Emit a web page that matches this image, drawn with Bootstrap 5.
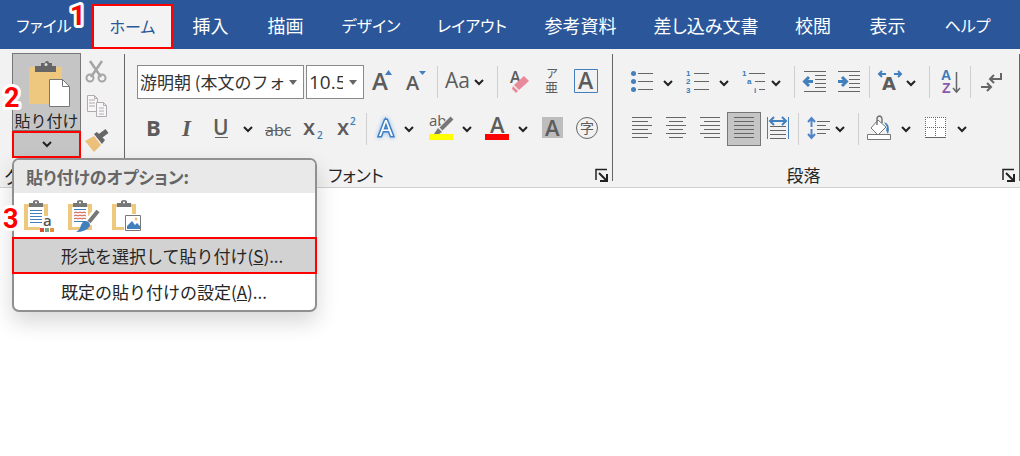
<!DOCTYPE html>
<html lang="ja">
<head>
<meta charset="utf-8">
<meta name="viewport" content="width=device-width, initial-scale=1">
<title>文書</title>
<link rel="stylesheet" href="https://cdn.jsdelivr.net/npm/bootstrap@5.3.0/dist/css/bootstrap.min.css">
<style>
  body { font-family: "Noto Sans CJK JP", sans-serif; font-size: 18px; line-height: 24px; font-feature-settings: "palt"; color: #262626; background: #fff; min-height: 100vh; }
  .tab-bar { background: #2b579a; display: grid; grid-template-columns: 88fr 85fr 75fr 75fr 96fr 106fr 111fr 140fr 74fr 75fr 85fr 10fr; height: 49px; padding-top: 4px; white-space: nowrap; }
  .tab-bar .nav-link { color: #fff; padding: 0 0 4px; display: flex; align-items: center; justify-content: center; }
  .tab-bar .kana-tab { font-size: 16px; }
  .tab-bar .nav-link.active { background: #f3f3f3; color: #2b579a; border: 2px solid #f00; margin-left: 4px; padding-bottom: 2px; }
  .ribbon { background: #f2f2f2; border-bottom: 1px solid #d0d0d0; }
  .ribbon .vr { color: #666; opacity: 1; margin: 5px 0 6px; }
  .tool-group { padding: 16px 0 0 12px; }
  .font-group { width: 487px; }
  .tool-row { display: flex; height: 34px; margin-bottom: 13px; }
  .tool-row button, .launcher { border: 0; padding: 0; background: none; line-height: 0; }
  .tool-row button:hover { background: #dcdcdc; }
  .tool-row .pressed { background: #c5c5c5; outline: 1px solid #777; outline-offset: -1px; }
  .tool-row i { width: 1px; margin: 1px 3px; background: #cfcfcf; }
  .group-name { display: flex; align-items: center; line-height: 24px; margin-left: -12px; padding: 4px 4px 0 0; }
  .group-name span { flex: 1; text-align: center; font-size: 17px; padding-right: 8px; }
  .font-box { appearance: none; border: 1px solid #8a8a8a; border-radius: 0; color: #333; padding: 0 16px 0 2px; background: #fff url("data:image/svg+xml,%3Csvg xmlns='http://www.w3.org/2000/svg' width='8' height='5'%3E%3Cpath d='M0 0h8L4 5z' fill='%23666'/%3E%3C/svg%3E") no-repeat right 6px center; font-size: 17px; margin-right: 2px; overflow: hidden; text-overflow: clip; }
  .font-face { width: 167px; }
  .font-size { width: 58px; font-family: "Open Sans", sans-serif; font-size: 19px; padding-right: 20px; }
  .clip-group { width: 124px; padding: 4px 12px 0; }
  .clip-name { font-size: 18px; margin: 6px -8px 0; height: 22px; white-space: nowrap; }
  .paste-btn { width: 69px; height: 78px; border: 1px solid #777; background: #c5c5c5; padding: 0; font-size: 16px; line-height: 20px; color: #262626; display: block; white-space: nowrap; }
  .paste-drop { width: 69px; height: 27px; border: 2px solid #f00; background: #c5c5c5; padding: 0; display: flex; align-items: center; justify-content: center; }
  .side-tools button { border: 0; background: none; padding: 0; line-height: 0; display: block; height: 35px; }
  .paste-menu { top: 109px; left: 12px; width: 305px; background: #fff; border: 2px solid #909090; border-radius: 7px; box-shadow: 0 10px 22px rgba(0,0,0,.16); z-index: 5; }
  .menu-head { background: #e9e9e9; color: #666; font-size: 17px; font-weight: 700; line-height: 33px; padding-left: 12px; border-radius: 5px 5px 0 0; margin: 0; }
  .paste-kinds { display: flex; gap: 12px; padding: 6px 0 4px 10px; height: 44px; }
  .paste-kinds button { border: 0; background: none; padding: 0; line-height: 0; }
  .menu-row { display: block; width: 100%; border: 0; background: none; text-align: left; padding: 0 0 0 47px; line-height: 36px; font-size: 17px; color: #262626; }
  .menu-row.chosen { background: #d2d2d2; border: 2px solid #f00; width: calc(100% + 4px); margin: 0 -2px; line-height: 33px; }
  .step { position: absolute; z-index: 8; font: 700 27px Roboto, Arial, sans-serif; overflow: visible; }
  .step text { fill: #f00; stroke: #fff; stroke-width: 6px; stroke-linejoin: round; paint-order: stroke; }
  .step-one { left: 67px; top: 2px; }
  .step-two { left: 2px; top: 34px; }
  .step-three { left: 2px; top: 155px; }
  svg { display: block; }
  .tool-row svg { overflow: visible; }
  .ink { fill: none; stroke: #666; stroke-width: 1; }
  .blue { fill: none; stroke: #4280bd; stroke-width: 2; }
  .tool-row text { font-family: "Open Sans", sans-serif; fill: #5c5c5c; font-weight: 600; }
  .tool-row .kana { font-family: "Noto Sans CJK JP", sans-serif; font-weight: 400; }
  .tool-row .azure { fill: #3c7ab8; }
  .tool-row .tiny { font-family: "Liberation Sans", sans-serif; font-size: 8px; font-weight: 700; }
  .tool-row .thin { font-weight: 400; }
</style>
</head>
<body>
<svg width="0" height="0" class="position-absolute" aria-hidden="true">
  <defs>
    <path id="chev" d="M-4-2 0 2 4-2" fill="none" stroke="#222" stroke-width="2"/>
    <g id="board"><path d="M0 4h24v26H0z" fill="#edc87e"/><path d="M4 7h16v20H4z" fill="#fff"/><path d="M5 7V3h4V1q3-2 6 0v2h4v4z" fill="#777"/><circle cx="12" cy="2.500" r="1" fill="#fff"/></g>
  </defs>
</svg>

<header class="position-relative">
  <nav class="tab-bar nav" aria-label="リボン">
    <a class="nav-link kana-tab" href="#">ファイル</a>
    <a class="nav-link kana-tab active" href="#" aria-current="page">ホーム</a>
    <a class="nav-link" href="#">挿入</a>
    <a class="nav-link" href="#">描画</a>
    <a class="nav-link kana-tab" href="#">デザイン</a>
    <a class="nav-link kana-tab" href="#">レイアウト</a>
    <a class="nav-link" href="#">参考資料</a>
    <a class="nav-link" href="#">差し込み文書</a>
    <a class="nav-link" href="#">校閲</a>
    <a class="nav-link" href="#">表示</a>
    <a class="nav-link kana-tab" href="#">ヘルプ</a>
  </nav>
  <svg class="step step-one" width="20" height="28"><text x="3" y="23">1</text></svg>
</header>

<section class="ribbon position-relative d-flex">
  <svg class="step step-two" width="20" height="28"><text x="2" y="24">2</text></svg>
  <div class="clip-group">
    <div class="d-flex">
      <div>
        <button class="paste-btn" type="button">
          <svg width="67" height="55" viewBox="0 0 67 55"><path d="M16 12h33v37H16z" fill="#edc87e"/><path d="M22 17v-6h6V8h4q0-2 2-2t2 2h3v3h4v6z" fill="#666"/><circle cx="33" cy="9.500" r="1.500" fill="#ddd"/><path d="M36.500 24.500h13l7 7v20h-20z" fill="#fff" stroke="#777"/><path d="M49.500 24.500v7h7" fill="none" stroke="#777"/></svg>
          貼り付け
        </button>
        <button class="paste-drop" type="button" aria-label="貼り付けメニュー"><svg width="12" height="8"><use href="#chev" x="6" y="3"/></svg></button>
      </div>
      <div class="side-tools">
        <button type="button" aria-label="切り取り"><svg width="30" height="34" fill="none" stroke="#a5a5a5" stroke-width="2"><path d="M9 7l11 16M21 7L10 23" stroke-width="2.500"/><circle cx="9" cy="24" r="3.500"/><circle cx="21" cy="24" r="3.500"/></svg></button>
        <button type="button" aria-label="コピー"><svg width="30" height="34" fill="#f7f7f7" stroke="#b2aab2"><path d="M6.500 6.500h7l3 3v13h-10zM13.500 6.500v3h3M8 11h6M8 14h6M8 17h6"/><path d="M15.500 13.500h7l3 3v11h-10zM22.500 13.500v3h3M18 19h5M18 22h5M18 25h5"/></svg></button>
        <button type="button" aria-label="書式のコピー"><svg width="30" height="34"><path d="M4 17l9-5 7 9-7 7z" fill="#edc07a"/><path d="M13 10l3-2 8 8-3 4z" fill="#666"/><path d="M18 13l8-6" stroke="#666" stroke-width="5"/></svg></button>
      </div>
    </div>
    <div class="clip-name">クリップボード</div>
  </div>
  <div class="vr"></div>

  <div class="tool-group font-group">
    <div class="tool-row">
      <select class="font-box font-face" aria-label="フォント"><option>游明朝 (本文のフォント)</option></select>
      <select class="font-box font-size" aria-label="フォント サイズ"><option>10.5</option></select>
      <button type="button" aria-label="拡大"><svg width="34" height="34"><text x="6" y="25" font-size="24">A</text><path d="M19 10l3.500-5 3.500 5z" fill="#4280bd"/></svg></button>
      <button type="button" aria-label="縮小"><svg width="34" height="34"><text x="6" y="25" font-size="20">A</text><path d="M19 6h7l-3.500 4z" fill="#4280bd"/></svg></button>
      <i></i>
      <button type="button" aria-label="文字種の変換"><svg width="53" height="34"><text class="thin" x="4" y="23" font-size="21">Aa</text><use href="#chev" x="38" y="17"/></svg></button>
      <i></i>
      <button type="button" aria-label="書式のクリア"><svg width="34" height="34"><text x="9" y="18" font-size="16">A</text><path d="M13 20l10-9 5 5-10 9z" fill="#e98a9c"/><path d="M12 21l5 5-2 2-4-4z" fill="#e98a9c"/></svg></button>
      <button type="button" aria-label="ルビ"><svg width="34" height="34"><text class="kana" x="11" y="13" font-size="12">ア</text><text class="kana" x="10" y="27" font-size="13">亜</text></svg></button>
      <button type="button" aria-label="囲み線"><svg width="34" height="34"><path class="blue" d="M5.500 4.500h23v23h-23z" style="stroke-width:1px"/><text x="9" y="24" font-size="23">A</text></svg></button>
    </div>
    <div class="tool-row">
      <button type="button" aria-label="太字"><svg width="34" height="34"><text x="9" y="24" font-size="22" style="font-weight:700">B</text></svg></button>
      <button type="button" aria-label="斜体"><svg width="34" height="34"><text x="11" y="24" style="font:italic 700 23px 'Liberation Serif',serif">I</text></svg></button>
      <button type="button" aria-label="下線"><svg width="56" height="34"><text x="8" y="23" font-size="21">U</text><path class="ink" d="M10 25.500h13"/><use href="#chev" x="43" y="17"/></svg></button>
      <button type="button" aria-label="取り消し線"><svg width="34" height="34"><text class="thin" x="4" y="24" font-size="16">abc</text><path class="ink" d="M4 18.500h25"/></svg></button>
      <button type="button" aria-label="下付き"><svg width="34" height="34"><text x="8" y="23" font-size="22">x</text><text class="azure" x="22" y="27" font-size="10">2</text></svg></button>
      <button type="button" aria-label="上付き"><svg width="34" height="34"><text x="8" y="23" font-size="22">x</text><text class="azure" x="21" y="13" font-size="10">2</text></svg></button>
      <i></i>
      <button type="button" aria-label="文字の効果"><svg width="56" height="34"><text x="9" y="24" font-size="22" style="fill:#fff;stroke:#3f80c4;stroke-width:3px;paint-order:stroke;font-weight:400;filter:drop-shadow(0 0 2px #8dbdf0)">A</text><use href="#chev" x="39" y="17"/></svg></button>
      <button type="button" aria-label="蛍光ペン"><svg width="56" height="34"><text class="thin" x="3" y="14" font-size="15">ab</text><path d="M25 7L14 18" stroke="#f2f2f2" stroke-width="6"/><path d="M26 6L15 17" stroke="#777" stroke-width="4"/><path d="M12 16l4 4-3 2H8z" fill="#777"/><path d="M3 22h24v6H3z" fill="#ff0"/><use href="#chev" x="41" y="17"/></svg></button>
      <button type="button" aria-label="フォントの色"><svg width="56" height="34"><text x="8" y="21" font-size="22">A</text><path d="M3 22h24v6H3z" fill="#f00"/><use href="#chev" x="41" y="17"/></svg></button>
      <button type="button" aria-label="文字の網かけ"><svg width="34" height="34"><path d="M4 5h21v21H4z" fill="#bdbdbd"/><text x="7" y="24" font-size="22">A</text></svg></button>
      <button type="button" aria-label="囲い文字"><svg width="34" height="34"><circle class="ink" cx="15" cy="16" r="10.500"/><text class="kana" x="8" y="21" font-size="14">字</text></svg></button>
    </div>
    <div class="group-name"><span>フォント</span><button class="launcher" type="button" aria-label="フォントの設定"><svg width="13" height="14" fill="none" stroke="#222"><path d="M1 12V1.500h11" stroke-width="1.500"/><path d="M4 5l7 7M12 6v7H5" stroke-width="2"/></svg></button></div>
  </div>
  <div class="vr"></div>

  <div class="tool-group flex-grow-1">
    <div class="tool-row">
      <button type="button" aria-label="箇条書き"><svg width="56" height="34"><g fill="#4280bd"><circle cx="8.500" cy="8.500" r="2.500"/><circle cx="8.500" cy="16.500" r="2.500"/><circle cx="8.500" cy="24.500" r="2.500"/></g><path class="ink" d="M13 8.500h15M13 16.500h15M13 24.500h15"/><use href="#chev" x="43" y="18"/></svg></button>
      <button type="button" aria-label="段落番号"><svg width="56" height="34"><text class="azure tiny" x="5" y="11">1</text><text class="azure tiny" x="5" y="19">2</text><text class="azure tiny" x="5" y="28">3</text><path class="ink" d="M13 8.500h15M13 16.500h15M13 24.500h15"/><use href="#chev" x="43" y="18"/></svg></button>
      <button type="button" aria-label="アウトライン"><svg width="54" height="34"><text class="azure tiny" x="5" y="11">1</text><text class="azure tiny" x="10" y="19">a</text><text class="azure tiny" x="17" y="28">i</text><path class="ink" d="M12 8.500h16M18 16.500h10M22 24.500h6"/><use href="#chev" x="39" y="18"/></svg></button>
      <i></i>
      <button type="button" aria-label="インデントを減らす"><svg width="34" height="34"><path class="ink" d="M6 6.500h22M17 10.500h11M17 14.500h11M17 18.500h11M17 22.500h11M6 26.500h22"/><path class="blue" d="M15 16.500H7M11 12l-4.500 4.500L11 21" style="stroke-width:3px"/></svg></button>
      <button type="button" aria-label="インデントを増やす"><svg width="34" height="34"><path class="ink" d="M6 6.500h22M17 10.500h11M17 14.500h11M17 18.500h11M17 22.500h11M6 26.500h22"/><path class="blue" d="M6 16.500h8M10 12l4.500 4.500L10 21" style="stroke-width:3px"/></svg></button>
      <i></i>
      <button type="button" aria-label="拡張書式"><svg width="53" height="34"><text x="9" y="25" style="font:700 18px 'DejaVu Sans',sans-serif">A</text><path class="blue" d="M13 9H6M9 6L6 9l3 3M21 9h7M25 6l3 3-3 3"/><use href="#chev" x="38" y="18"/></svg></button>
      <i></i>
      <button type="button" aria-label="並べ替え"><svg width="34" height="34"><text class="azure" x="8" y="15" style="font:700 14px 'Liberation Sans',sans-serif">A</text><text x="9" y="28" style="font:700 14px 'Liberation Sans',sans-serif;fill:#8d57ac">Z</text><path class="ink" d="M23.500 7v19M20 23l3.500 4 3.500-4" style="stroke-width:1.500px"/></svg></button>
      <i></i>
      <button type="button" aria-label="編集記号"><svg width="34" height="34"><path class="ink" d="M27 8v6H17M20 10l-4 4 4 4M7 22h10M13 18l4 4-4 4" style="stroke-width:2px"/></svg></button>
    </div>
    <div class="tool-row">
      <button type="button" aria-label="左揃え"><svg width="34" height="34"><path class="ink" d="M7 5.500h20M7 9.500h16M7 13.500h20M7 17.500h16M7 21.500h20M7 25.500h16"/></svg></button>
      <button type="button" aria-label="中央揃え"><svg width="34" height="34"><path class="ink" d="M7 5.500h20M10 9.500h14M7 13.500h20M10 17.500h14M7 21.500h20M10 25.500h14"/></svg></button>
      <button type="button" aria-label="右揃え"><svg width="34" height="34"><path class="ink" d="M7 5.500h20M11 9.500h16M7 13.500h20M11 17.500h16M7 21.500h20M11 25.500h16"/></svg></button>
      <button type="button" class="pressed" aria-label="両端揃え" aria-pressed="true"><svg width="34" height="34"><path class="ink" d="M7 5.500h20M7 9.500h20M7 13.500h20M7 17.500h20M7 21.500h20M7 25.500h20"/></svg></button>
      <button type="button" aria-label="均等割り付け"><svg width="34" height="34"><path class="blue" d="M6.500 5v22M27.500 5v22" style="stroke-width:1px"/><path class="blue" d="M9 9h16M13 5L9 9l4 4M21 5l4 4-4 4"/><path class="ink" d="M9 14.500h16M9 18.500h16M9 22.500h16M9 26.500h16"/></svg></button>
      <i></i>
      <button type="button" aria-label="行間"><svg width="53" height="34"><path class="blue" d="M9.500 15V6M6 10l3.500-4 3.500 4M9.500 17v9M6 22l3.500 4 3.500-4" style="stroke:#5083c7"/><path class="ink" d="M15 9.500h13M15 13.500h9M15 17.500h13M15 21.500h9"/><use href="#chev" x="38" y="17"/></svg></button>
      <i></i>
      <button type="button" aria-label="塗りつぶし"><svg width="56" height="34"><path d="M9 16l7-8 8 7-8 8z" fill="#fff" stroke="#777"/><path d="M15 13V7q0-3 3-3 2 1 2 3v4" fill="none" stroke="#777" stroke-width="1.500"/><path d="M22 10q7 2 4 12-3-4-1-7z" fill="#4280bd"/><path d="M5.500 22.500h23v5h-23z" fill="#fff" stroke="#777"/><use href="#chev" x="44" y="17"/></svg></button>
      <button type="button" aria-label="罫線"><svg width="56" height="34"><path d="M7 5h21v20H7z" fill="#fff"/><path class="ink" d="M7 5.500h21M7 15.500h21M7.500 5v20M17.500 5v20M27.500 5v20" stroke-dasharray="1 1"/><path class="ink" d="M7 25.500h21"/><use href="#chev" x="44" y="17"/></svg></button>
    </div>
    <div class="group-name"><span>段落</span><button class="launcher" type="button" aria-label="段落の設定"><svg width="13" height="14" fill="none" stroke="#222"><path d="M1 12V1.500h11" stroke-width="1.500"/><path d="M4 5l7 7M12 6v7H5" stroke-width="2"/></svg></button></div>
  </div>
  <div class="vr"></div>

  <div class="paste-menu position-absolute">
    <h2 class="menu-head">貼り付けのオプション:</h2>
    <div class="paste-kinds">
      <button type="button" aria-label="元の書式を保持"><svg width="32" height="34"><use href="#board" y="1"/><path d="M6 11.500h12M6 14.500h12M6 17.500h12M6 20.500h12M6 23.500h12" stroke="#4280bd"/><path d="M19 17h12v16H16v-5h3z" fill="#fff"/><text x="19" y="27" font-size="15" font-family="Open Sans" font-weight="600" fill="#555">a</text><path d="M16 29h4v4h-4z" fill="#d25135"/><path d="M21 29h4v4h-4z" fill="#73a58d"/><path d="M26 29h4v4h-4z" fill="#e78f41"/></svg></button>
      <button type="button" aria-label="書式を結合"><svg width="32" height="34"><use href="#board" y="1"/><path d="M6 10.500h12M6 22.500h12" stroke="#4280bd"/><path d="M6 14l2-1 2 1 2-1 2 1 2-1 2 1M6 17l2-1 2 1 2-1 2 1 2-1 2 1M6 20l2-1 2 1 2-1 2 1 2-1 2 1" fill="none" stroke="#cf4b3a"/><path d="M30 11l-10 13" stroke="#fff" stroke-width="8"/><path d="M30 12l-9 11" stroke="#777" stroke-width="4"/><path d="M17 22q5 0 5 5-4 6-14 6 4-2 5-7 1-3 4-4z" fill="#4280bd"/></svg></button>
      <button type="button" aria-label="図"><svg width="32" height="34"><use href="#board" y="1"/><path d="M12 15h14v17H12z" fill="#fff"/><path d="M13.500 16.500h15v15h-15z" fill="#fff" stroke="#777"/><path d="M15 30v-3l5-5 3 4 2-2 3 3v3z" fill="#4280bd"/><circle cx="24" cy="20" r="1.500" fill="#edc07a"/></svg></button>
    </div>
    <button class="menu-row chosen" type="button">形式を選択して貼り付け(<u>S</u>)...</button>
    <button class="menu-row" type="button">既定の貼り付けの設定(<u>A</u>)...</button>
  </div>
  <svg class="step step-three" width="20" height="28"><text x="1" y="24">3</text></svg>
</section>
<script src="https://cdn.jsdelivr.net/npm/bootstrap@5.3.0/dist/js/bootstrap.bundle.min.js"></script>
</body>
</html>
